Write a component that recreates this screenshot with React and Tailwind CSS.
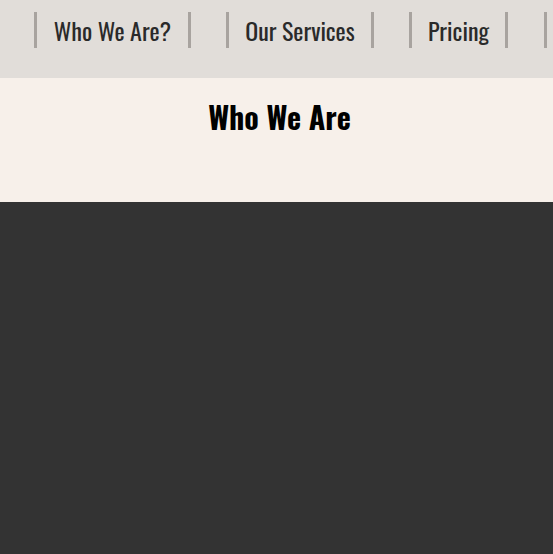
const navItems = [
  { label: "Who We Are?", width: "w-[157px]" },
  { label: "Our Services", width: "w-[148px]" },
  { label: "Pricing", width: "w-[99px]" },
  { label: "Contact", width: "w-[110px]" },
];

export default function App() {
  return (
    <div
      className="min-h-[554px] bg-[#333333] overflow-hidden"
      style={{ fontFamily: '"Oswald", "Roboto Condensed", sans-serif' }}
    >
      <nav className="h-[78px] bg-[#e1ddd9] pt-[12px] overflow-hidden">
        <ul className="flex whitespace-nowrap pl-[34px]">
          {navItems.map((item, i) => (
            <li
              key={item.label}
              className={`${item.width} ${i === 2 ? "mr-[36px]" : "mr-[35px]"} shrink-0 border-x-[3px] border-[#a8a39f] text-center text-2xl leading-[36px] text-[#2a2a2a]`}
            >
              {i < 3 ? item.label : ""}
            </li>
          ))}
        </ul>
      </nav>

      <section className="h-[124px] bg-[#f7f0ea] pt-[19px] pl-[6px]">
        <h2 className="text-center text-[30px] font-bold leading-[40px] text-black">Who We Are</h2>
      </section>
    </div>
  );
}
